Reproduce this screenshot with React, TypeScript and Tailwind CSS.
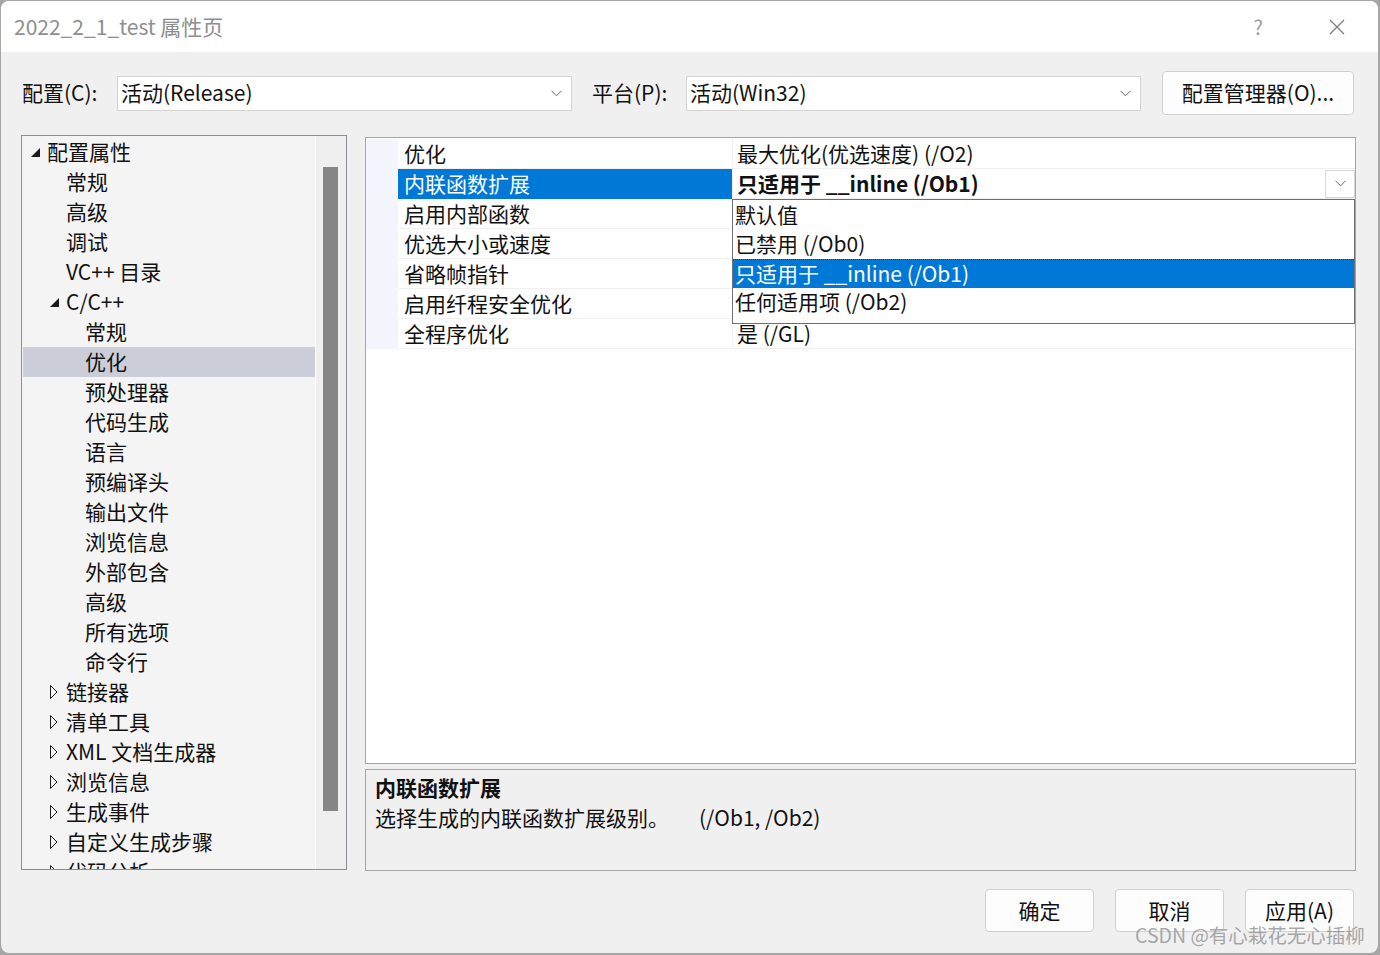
import React from "react";

type TreeItem = { label: string; level: number; arrow?: "open" | "closed"; selected?: boolean };

const tree: TreeItem[] = [
  { label: "配置属性", level: 0, arrow: "open" },
  { label: "常规", level: 1 },
  { label: "高级", level: 1 },
  { label: "调试", level: 1 },
  { label: "VC++ 目录", level: 1 },
  { label: "C/C++", level: 1, arrow: "open" },
  { label: "常规", level: 2 },
  { label: "优化", level: 2, selected: true },
  { label: "预处理器", level: 2 },
  { label: "代码生成", level: 2 },
  { label: "语言", level: 2 },
  { label: "预编译头", level: 2 },
  { label: "输出文件", level: 2 },
  { label: "浏览信息", level: 2 },
  { label: "外部包含", level: 2 },
  { label: "高级", level: 2 },
  { label: "所有选项", level: 2 },
  { label: "命令行", level: 2 },
  { label: "链接器", level: 1, arrow: "closed" },
  { label: "清单工具", level: 1, arrow: "closed" },
  { label: "XML 文档生成器", level: 1, arrow: "closed" },
  { label: "浏览信息", level: 1, arrow: "closed" },
  { label: "生成事件", level: 1, arrow: "closed" },
  { label: "自定义生成步骤", level: 1, arrow: "closed" },
  { label: "代码分析", level: 1, arrow: "closed" },
];

const indent = ["pl-[8px]", "pl-[27px]", "pl-[46px]"];

const props = [
  { name: "优化", value: "最大优化(优选速度) (/O2)" },
  { name: "内联函数扩展", value: "只适用于 __inline (/Ob1)", selected: true },
  { name: "启用内部函数", value: "" },
  { name: "优选大小或速度", value: "" },
  { name: "省略帧指针", value: "" },
  { name: "启用纤程安全优化", value: "" },
  { name: "全程序优化", value: "是 (/GL)" },
];

const options = ["默认值", "已禁用 (/Ob0)", "只适用于 __inline (/Ob1)", "任何适用项 (/Ob2)"];

function Chevron() {
  return (
    <svg width="11" height="7" viewBox="0 0 11 7" className="shrink-0">
      <path d="M0.5 0.8 L5.5 5.8 L10.5 0.8" fill="none" stroke="#666" strokeWidth="1" />
    </svg>
  );
}

function Arrow({ kind }: { kind?: "open" | "closed" }) {
  if (kind === "open")
    return (
      <svg width="10" height="10" viewBox="0 0 10 10" className="mt-[3px]">
        <polygon points="9,0 9,9 0,9" fill="#1a1a1a" />
      </svg>
    );
  if (kind === "closed")
    return (
      <svg width="8" height="14" viewBox="0 0 8 14" className="mt-[2px]">
        <polygon points="0.5,0.5 7,7 0.5,13.5" fill="none" stroke="#1a1a1a" strokeWidth="1" />
      </svg>
    );
  return null;
}

function Combo({ text }: { text: string }) {
  return (
    <div className="w-[455px] h-[35px] bg-white border border-[#d4d4d4] flex items-center justify-between pl-[3px] pr-[9px]">
      <span className="pb-[2px]">{text}</span>
      <Chevron />
    </div>
  );
}

function Button({ children, w = "w-[109px]" }: { children: React.ReactNode; w?: string }) {
  return (
    <div className={`${w} h-[43px] bg-[#fdfdfd] border border-[#d0d0d0] rounded-[4px] flex items-center justify-center pb-[2px]`}>
      {children}
    </div>
  );
}

export default function App() {
  return (
    <div className="relative w-[1380px] h-[955px] bg-[#a6a6a6] pl-[1px] pt-[1px] overflow-hidden font-['Noto_Sans_CJK_SC','Noto_Sans',sans-serif] text-[21px] leading-[30px] text-[#111]">
      <div className="w-[1377px] h-[952px] rounded-[8px] overflow-hidden bg-[#f0f0f0] flex flex-col">
        {/* title bar */}
        <div className="h-[51px] bg-white flex items-center pl-[13px] pr-[33px] shrink-0">
          <span className="text-[21px] text-[#8e8e8e] flex-1 pb-[2px]">2022_2_1_test 属性页</span>
          <span className="text-[20px] text-[#9a9a9a] mr-[66px]">?</span>
          <svg width="16" height="16" viewBox="0 0 16 16">
            <path d="M1 1 L15 15 M15 1 L1 15" stroke="#7a7a7a" strokeWidth="1.2" />
          </svg>
        </div>

        <div className="flex-1 pl-[20px] pr-[22px] pt-[19px]">
          {/* config row */}
          <div className="h-[44px] flex items-center">
            <span className="w-[96px] pl-[1px] pb-[2px]">配置(C):</span>
            <Combo text="活动(Release)" />
            <span className="w-[94px] ml-[20px] pb-[2px]">平台(P):</span>
            <Combo text="活动(Win32)" />
            <div className="ml-[21px]">
              <Button w="w-[192px] h-[44px]">配置管理器(O)...</Button>
            </div>
          </div>

          {/* main */}
          <div className="mt-[20px] h-[736px] flex">
            {/* tree */}
            <div className="w-[326px] h-[735px] border border-[#8c8c9a] flex">
              <div className="flex-1 bg-[#f4f4f4] pt-[1px] overflow-hidden">
                {tree.map((t, i) => (
                  <div
                    key={i}
                    className={`h-[30px] flex items-center ml-[1px] pb-[2px] ${indent[t.level]} ${t.selected ? "bg-[#cbcdd9]" : ""}`}
                  >
                    <div className="w-[16px] flex items-center">
                      <Arrow kind={t.arrow} />
                    </div>
                    <span className="whitespace-nowrap">{t.label}</span>
                  </div>
                ))}
              </div>
              <div className="w-[1px] bg-white" />
              <div className="w-[30px] bg-[#efefef] pt-[31px] pl-[7px]">
                <div className="w-[15px] h-[644px] bg-[#868686]" />
              </div>
            </div>

            {/* right side */}
            <div className="ml-[18px] w-[991px] mt-[2px] flex flex-col">
              <div className="relative h-[627px] border border-[#a6a6a6] bg-white pt-[1px]">
                {props.map((p, i) => (
                  <div key={i} className="h-[30px] flex">
                    <div className="w-[32px] bg-[#f2f5fb]" />
                    <div
                      className={`w-[334px] pl-[6px] pb-[2px] flex items-center border-b ${
                        p.selected ? "bg-[#0078d7] text-white border-[#0078d7]" : "border-[#f0f0f0]"
                      }`}
                    >
                      {p.name}
                    </div>
                    <div className="flex-1 border-l border-b border-[#f0f0f0] pl-[4px] flex items-center justify-between">
                      <span className={`pb-[2px] ${p.selected ? "font-bold" : ""}`}>{p.value}</span>
                      {p.selected && (
                        <div className="w-[30px] h-[28px] border border-[#d8d8d8] bg-white flex items-center justify-center">
                          <Chevron />
                        </div>
                      )}
                    </div>
                  </div>
                ))}

                {/* dropdown list */}
                <div className="absolute left-[366px] top-[61px] w-[623px] h-[125px] bg-white border border-[#6e6e6e] pt-[1px]">
                  {options.map((o, i) => (
                    <div
                      key={i}
                      className={`h-[29px] flex items-center pl-[2px] pb-[3px] whitespace-nowrap ${
                        i === 2 ? "bg-[#0078d7] text-white border-t border-dotted border-[#4a3a20]" : ""
                      }`}
                    >
                      {o}
                    </div>
                  ))}
                </div>
              </div>

              <div className="mt-[5px] h-[102px] border border-[#a6a6a6] bg-[#f0f0f0] pl-[9px] pt-[2px]">
                <div className="font-bold">内联函数扩展</div>
                <div>
                  选择生成的内联函数扩展级别。
                  <span className="ml-[30px]">(/Ob1, /Ob2)</span>
                </div>
              </div>
            </div>
          </div>

          {/* buttons */}
          <div className="mt-[18px] flex justify-end gap-[21px] pr-[2px]">
            <Button>确定</Button>
            <Button>取消</Button>
            <Button>应用(A)</Button>
          </div>
        </div>
      </div>

      <div className="absolute left-[1135px] top-[921px] text-[19.5px] leading-[28px] text-[rgba(140,140,140,0.75)] whitespace-nowrap">
        CSDN @有心栽花无心插柳
      </div>
    </div>
  );
}
